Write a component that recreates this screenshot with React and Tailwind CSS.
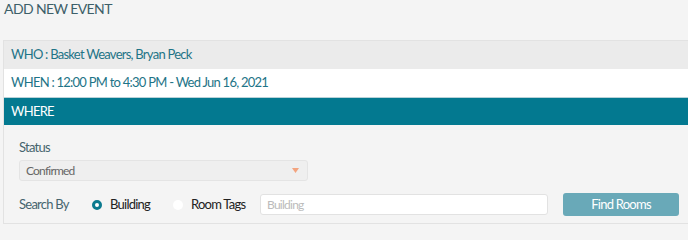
import React from "react";

export default function App() {
    return (
        <div className="h-[240px] w-[688px] overflow-hidden bg-[#f4f4f4] font-['Lato',sans-serif] tracking-[-0.75px]">
            <div className="h-[40px] pl-[4px] pt-[1px] text-[14px] leading-[16px] text-[#3d5f69] tracking-[-0.6px]">
                ADD NEW EVENT
            </div>
            <div className="ml-[3px] w-[720px] border border-[#e2e2e2]">
                <div className="flex h-[28px] items-center bg-[#ebebeb] px-[7px] text-[13px] text-[#1e7487]">
                    WHO : Basket Weavers, Bryan Peck
                </div>
                <div className="flex h-[28px] items-center bg-white px-[7px] text-[13px] text-[#1e7487]">
                    WHEN : 12:00 PM to 4:30 PM - Wed Jun 16, 2021
                </div>
                <div className="flex h-[28px] items-center border-t border-[#b9d2d8] bg-[#037990] px-[7px] text-[13px] text-white">
                    WHERE
                </div>
                <div className="bg-[#f4f4f4] px-[15px] pt-[14px] pb-[7px]">
                    <div className="text-[13px] leading-[16px] text-[#46646e]">Status</div>
                    <div className="mt-[5px] flex h-[21px] w-[289px] items-center justify-between rounded-[3px] border border-[#e4e4e4] bg-[#efefef] pl-[6px] pr-[8px]">
                        <span className="text-[12px] text-[#666] tracking-[-0.8px]">Confirmed</span>
                        <svg width="7" height="5" viewBox="0 0 7 5">
                            <path d="M0 0 L7 0 L3.5 5 Z" fill="#f3a47f" />
                        </svg>
                    </div>
                    <div className="mt-[12px] flex h-[23px] items-center">
                        <span className="w-[73px] text-[13px] text-[#46646e]">Search By</span>
                        <span className="h-[10px] w-[10px] shrink-0 rounded-full border-[3px] border-[#0b7a8f] bg-white" />
                        <span className="ml-[8px] w-[40px] text-[13px] text-[#222]">Building</span>
                        <span className="ml-[23px] h-[10px] w-[10px] shrink-0 rounded-full bg-white" />
                        <span className="ml-[8px] w-[54px] whitespace-nowrap text-[13px] text-[#222]">Room Tags</span>
                        <div className="ml-[15px] flex h-[21px] w-[288px] shrink-0 items-center rounded-[3px] border border-[#e2e2e2] bg-white pl-[6px] text-[12px] text-[#bbb]">
                            Building
                        </div>
                        <button className="ml-[15px] h-[23px] w-[116px] shrink-0 rounded-[3px] bg-[#69a9b8] text-[13px] text-white">
                            Find Rooms
                        </button>
                    </div>
                </div>
            </div>
        </div>
    );
}
